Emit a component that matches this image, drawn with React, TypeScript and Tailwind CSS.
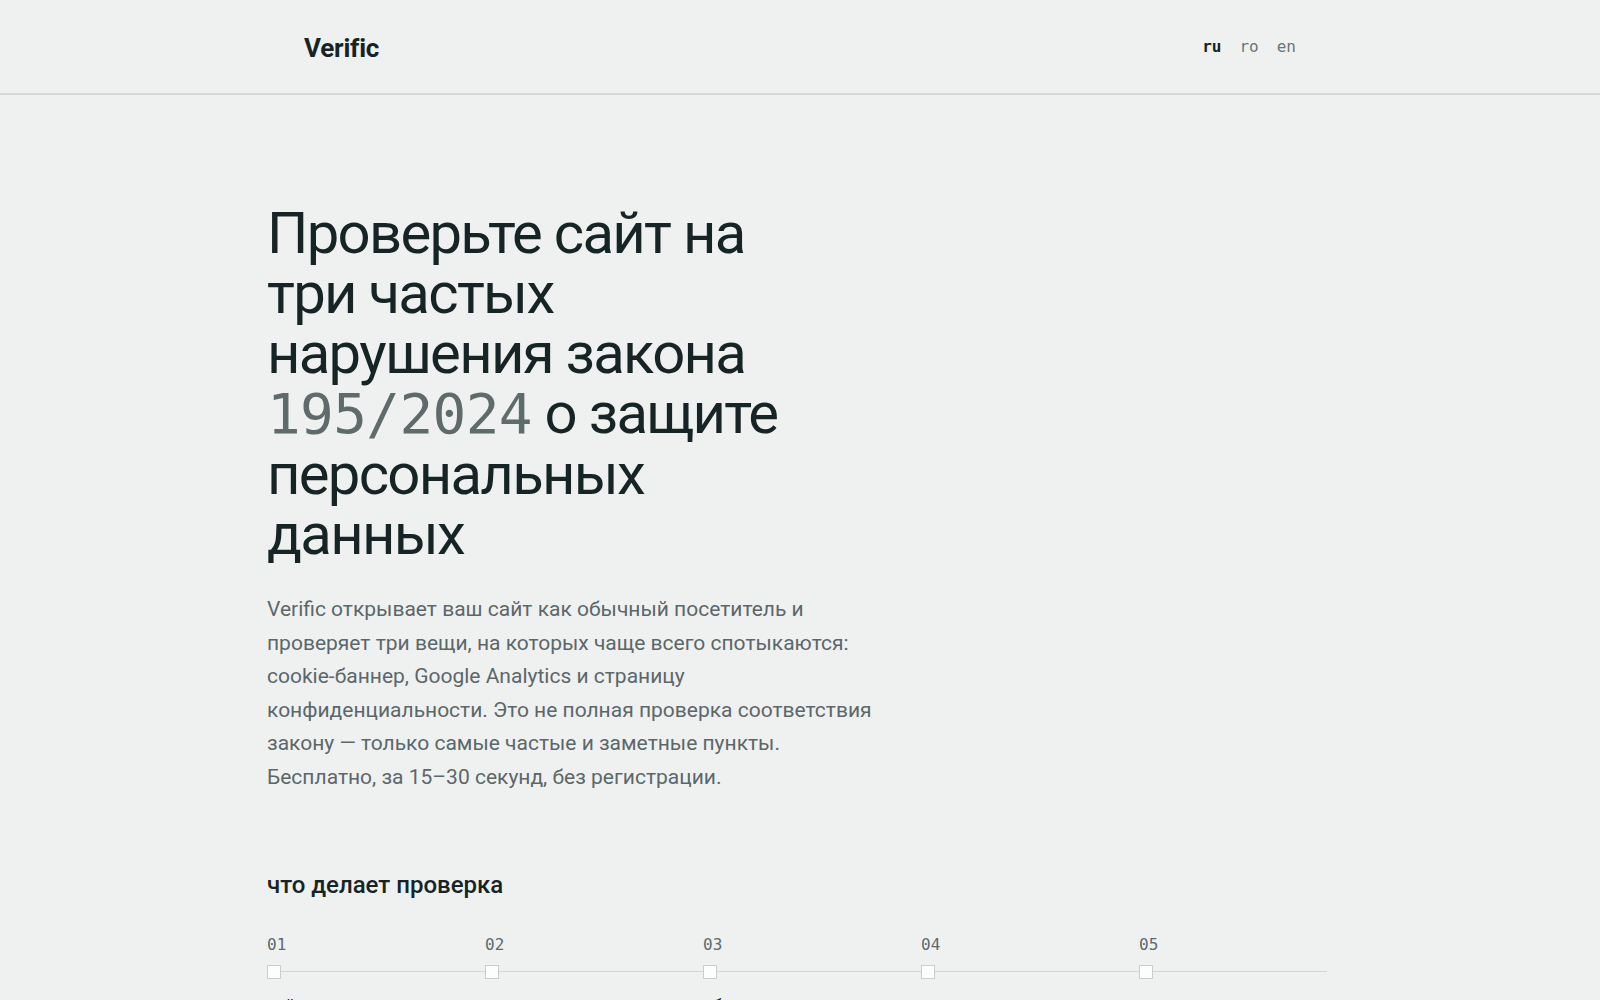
import React from "react";

const steps = [
  { n: "01", t: "сайт открывается в браузере" },
  { n: "02", t: "нажимаем «отклонить»" },
  { n: "03", t: "обход страниц" },
  { n: "04", t: "ищем страницу конфиденциальности" },
  { n: "05", t: "выводим результат" },
];

export default function App() {
  return (
    <div
      className="min-h-screen bg-[#eff1f1] text-[#172426]"
      style={{ fontFamily: "Roboto, 'Noto Sans', sans-serif" }}
    >
      <header className="border-b-2 border-[#d5d8d8]">
        <div className="mx-auto flex h-[93px] max-w-5xl items-center justify-between px-4">
          <div className="pt-[4px] text-[26px] font-bold tracking-[-0.2px] text-[#172426]">
            Verific
          </div>
          <nav className="flex gap-[18px] font-['DejaVu_Sans_Mono',monospace] text-[16px] leading-none">
            <span className="font-bold text-[#172426]">ru</span>
            <span className="text-[#6b7575]">ro</span>
            <span className="text-[#6b7575]">en</span>
          </nav>
        </div>
      </header>

      <main className="mx-auto w-[1066px] pt-[108px]">
        <h1 className="text-[58px] font-normal leading-[60px] tracking-[-1.7px] text-[#172426]">
          <span className="block whitespace-nowrap">Проверьте сайт на</span>
          <span className="block whitespace-nowrap">три частых</span>
          <span className="block whitespace-nowrap">нарушения закона</span>
          <span className="block whitespace-nowrap">
            <span className="font-['DejaVu_Sans_Mono',monospace] text-[56px] tracking-[-0.6px] text-[#5f6a6b]">
              195/2024
            </span>{" "}
            о защите
          </span>
          <span className="block whitespace-nowrap">персональных</span>
          <span className="block whitespace-nowrap">данных</span>
        </h1>

        <p className="mt-[29px] text-[21px] leading-[33.6px] text-[#5c6769]">
          <span className="block whitespace-nowrap">Verific открывает ваш сайт как обычный посетитель и</span>
          <span className="block whitespace-nowrap">проверяет три вещи, на которых чаще всего спотыкаются:</span>
          <span className="block whitespace-nowrap">cookie-баннер, Google Analytics и страницу</span>
          <span className="block whitespace-nowrap">конфиденциальности. Это не полная проверка соответствия</span>
          <span className="block whitespace-nowrap">закону — только самые частые и заметные пункты.</span>
          <span className="block whitespace-nowrap">Бесплатно, за 15–30 секунд, без регистрации.</span>
        </p>

        <section className="mt-[74px] w-[1060px]">
          <h2 className="text-[24px] font-medium leading-[32px] text-[#172426]">
            что делает проверка
          </h2>

          <div className="mt-[32px] grid grid-cols-5 gap-x-[30px]">
            {steps.map((s) => (
              <div
                key={s.n}
                className="font-['DejaVu_Sans_Mono',monospace] text-[16px] leading-[24px] text-[#5f6a6b]"
              >
                {s.n}
              </div>
            ))}
          </div>

          <div className="relative mt-[8px] h-[14px]">
            <div className="absolute inset-x-0 top-[6px] h-[1.5px] bg-[#d2d5d5]" />
            <div className="relative grid h-full grid-cols-5 gap-x-[30px]">
              {steps.map((s) => (
                <div key={s.n}>
                  <div className="h-[14px] w-[14px] border-[1.5px] border-[#c9cdcd] bg-[#fcfdfd]" />
                </div>
              ))}
            </div>
          </div>

          <div className="mt-[13px] grid grid-cols-5 gap-x-[30px] pb-16">
            {steps.map((s) => (
              <div key={s.n} className="text-[17px] leading-[26px] text-[#172426]">
                {s.t}
              </div>
            ))}
          </div>
        </section>
      </main>
    </div>
  );
}
